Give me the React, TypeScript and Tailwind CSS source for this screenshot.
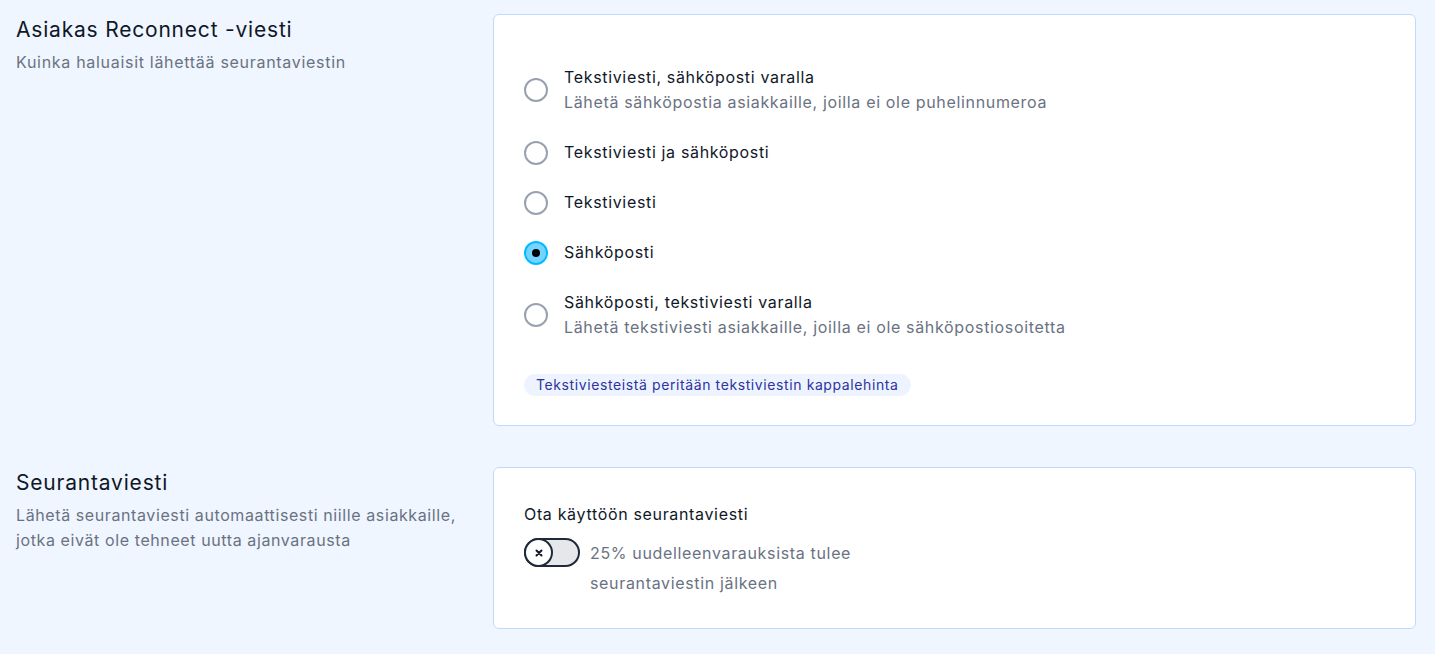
import React, { useState } from 'react';

interface Option {
  id: string;
  label: string;
  hint?: string;
}

const options: Option[] = [
  { id: 'sms-email', label: 'Tekstiviesti, sähköposti varalla', hint: 'Lähetä sähköpostia asiakkaille, joilla ei ole puhelinnumeroa' },
  { id: 'both', label: 'Tekstiviesti ja sähköposti' },
  { id: 'sms', label: 'Tekstiviesti' },
  { id: 'email', label: 'Sähköposti' },
  { id: 'email-sms', label: 'Sähköposti, tekstiviesti varalla', hint: 'Lähetä tekstiviesti asiakkaille, joilla ei ole sähköpostiosoitetta' },
];

function Radio({ checked }: { checked: boolean }) {
  if (checked) {
    return (
      <span className="flex h-6 w-6 shrink-0 items-center justify-center rounded-full border-2 border-sky-400 bg-sky-300">
        <span className="h-2 w-2 rounded-full bg-black" />
      </span>
    );
  }
  return <span className="h-6 w-6 shrink-0 rounded-full border-2 border-gray-400 bg-white" />;
}

export default function App() {
  const [selected, setSelected] = useState('email');
  const [enabled, setEnabled] = useState(false);

  return (
    <div className="min-h-screen bg-[#eff6ff] pl-4 pr-[19px] pt-[14px] pb-6" style={{ fontFamily: 'Inter, "Noto Sans", sans-serif' }}>
      {/* Reconnect-viesti */}
      <div className="grid grid-cols-[445px_1fr] gap-8">
        <div className="pt-[2px]">
          <h2 className="text-[21px] leading-7 tracking-[0.8px] text-gray-900">Asiakas Reconnect -viesti</h2>
          <p className="mt-[6px] text-base leading-6 tracking-[0.7px] text-gray-500">Kuinka haluaisit lähettää seurantaviestin</p>
        </div>
        <div className="rounded-md border border-blue-200 bg-white px-[30px] pt-[50px] pb-[29px]">
          <div className="flex flex-col gap-[25px]">
            {options.map((o) => (
              <label key={o.id} className="flex cursor-pointer items-center gap-4" onClick={() => setSelected(o.id)}>
                <Radio checked={selected === o.id} />
                <div className="text-base leading-[25px] tracking-[0.66px]">
                  <div className="text-gray-900">{o.label}</div>
                  {o.hint && <div className="text-gray-500">{o.hint}</div>}
                </div>
              </label>
            ))}
          </div>
          <div className="mt-8">
            <span className="inline-block rounded-full bg-[#eef4ff] px-3 text-sm leading-[22px] tracking-[0.6px] text-[#2f33a0]">
              Tekstiviesteistä peritään tekstiviestin kappalehinta
            </span>
          </div>
        </div>
      </div>

      {/* Seurantaviesti */}
      <div className="mt-[41px] grid grid-cols-[445px_1fr] gap-8">
        <div className="pt-[2px]">
          <h2 className="text-[21px] leading-7 tracking-[0.8px] text-gray-900">Seurantaviesti</h2>
          <p className="mt-[6px] text-base leading-[25px] tracking-[0.6px] text-gray-500">
            Lähetä seurantaviesti automaattisesti niille asiakkaille, jotka eivät ole tehneet uutta ajanvarausta
          </p>
        </div>
        <div className="rounded-md border border-blue-200 bg-white px-[30px] pt-[34px] pb-[30px]">
          <div className="text-base leading-6 tracking-[0.66px] text-gray-900">Ota käyttöön seurantaviesti</div>
          <div className="mt-[12px] flex items-start gap-[10px]">
            <button
              onClick={() => setEnabled(!enabled)}
              className="relative h-[29px] w-14 shrink-0 rounded-full border-2 border-gray-800 bg-gray-200"
            >
              <span className="absolute -left-[2px] -top-[2px] flex h-[29px] w-[29px] items-center justify-center rounded-full border-2 border-gray-800 bg-white">
                <svg width="8" height="8" viewBox="0 0 8 8" fill="none" stroke="#111827" strokeWidth="2" strokeLinecap="round">
                  <path d="M1.5 1.5l5 5M6.5 1.5l-5 5" />
                </svg>
              </span>
            </button>
            <p className="w-[320px] text-base leading-[30px] tracking-[0.66px] text-gray-500">
              25% uudelleenvarauksista tulee seurantaviestin jälkeen
            </p>
          </div>
        </div>
      </div>
    </div>
  );
}
